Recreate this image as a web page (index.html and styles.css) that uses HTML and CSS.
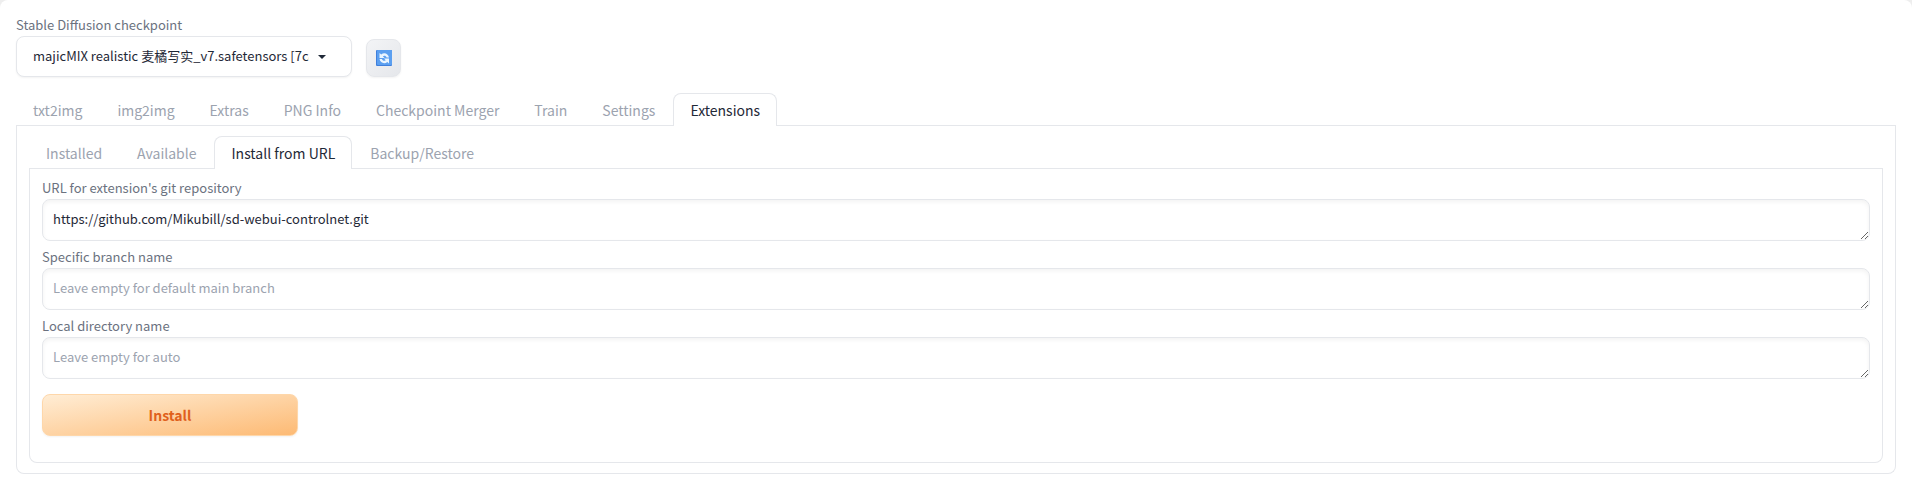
FILE: index.html
```html
<!DOCTYPE html>
<html lang="en">
<head>
    <meta charset="UTF-8">
    <meta name="viewport" content="width=device-width, initial-scale=1.0">
    <title>Stable Diffusion</title>
    <link rel="stylesheet" href="styles.css">
</head>
<body>
    <main class="app">
        <div class="quicksettings">
            <div class="checkpoint">
                <label for="checkpoint">Stable Diffusion checkpoint</label>
                <div class="dropdown">
                    <select id="checkpoint">
                        <option>majicMIX realistic 麦橘写实_v7.safetensors [7c819b6d13]</option>
                    </select>
                    <svg class="arrow" viewBox="0 0 18 18" width="18" height="18"><path d="M5 7h8l-4 4z"/></svg>
                </div>
            </div>
            <button type="button" class="tool" aria-label="Refresh">
                <svg viewBox="0 0 16 16" width="16" height="16">
                    <rect width="16" height="16" rx="1" fill="#3f7fdc"/>
                    <rect x="1" width="15" height="15" rx="1" fill="#5b9ff0"/>
                    <path d="M3.500 3v5H8.500L6.800 6.300C8.300 5.200 10 5.800 10.600 7.500H13C12.300 3.800 8.200 2 5.200 4.600z" fill="#eaf5ff"/>
                    <path d="M13 13.500v-5H8l1.700 1.700C8.200 11.300 6.500 10.700 5.900 9H3.500c.7 3.700 4.800 5.500 7.800 2.900z" fill="#eaf5ff"/>
                </svg>
            </button>
        </div>

        <div class="tabs">
            <nav class="tab-nav">
                <button type="button">txt2img</button>
                <button type="button">img2img</button>
                <button type="button">Extras</button>
                <button type="button">PNG Info</button>
                <button type="button">Checkpoint Merger</button>
                <button type="button">Train</button>
                <button type="button">Settings</button>
                <button type="button" class="selected">Extensions</button>
            </nav>
            <div class="tabitem">
                <div class="tabs">
                    <nav class="tab-nav">
                        <button type="button">Installed</button>
                        <button type="button">Available</button>
                        <button type="button" class="selected">Install from URL</button>
                        <button type="button">Backup/Restore</button>
                    </nav>
                    <form class="tabitem install-form">
                        <div class="field">
                            <label for="url">URL for extension's git repository</label>
                            <textarea id="url" rows="1" spellcheck="false">https://github.com/Mikubill/sd-webui-controlnet.git</textarea>
                        </div>
                        <div class="field">
                            <label for="branch">Specific branch name</label>
                            <textarea id="branch" rows="1" placeholder="Leave empty for default main branch"></textarea>
                        </div>
                        <div class="field">
                            <label for="dirname">Local directory name</label>
                            <textarea id="dirname" rows="1" placeholder="Leave empty for auto"></textarea>
                        </div>
                        <button type="button" class="primary">Install</button>
                    </form>
                </div>
            </div>
        </div>
    </main>
</body>
</html>
```
FILE: styles.css
```css
*{
    margin: 0;
    padding: 0;
    box-sizing: border-box;
}
html{
    background: #eee;
}
body, button, select, textarea{
    font-family: "Noto Sans CJK SC", sans-serif;
    font-size: 13px;
    line-height: 20px;
    color: #1f2937;
}
.app{
    min-height: 100vh;
    padding: 16px;
    background: #fff;
    border-radius: 8px 8px 0 0;
}
label{
    display: block;
    margin-bottom: 2px;
    line-height: 18px;
    color: #6b7280;
}
.quicksettings{
    display: flex;
    align-items: flex-end;
    gap: 14px;
    margin-bottom: 16px;
}
.dropdown{
    position: relative;
    width: 336px;
}
select{
    display: block;
    width: 100%;
    height: 41px;
    padding: 0 42px 2px 16px;
    appearance: none;
    background: #fff;
    border: 1px solid #e5e7eb;
    border-radius: 8px;
    box-shadow: 0 1px 2px rgba(0,0,0,0.05);
}
.arrow{
    position: absolute;
    top: 12px;
    right: 21px;
    fill: #1f2937;
    pointer-events: none;
}
.tool{
    display: flex;
    align-items: center;
    justify-content: center;
    width: 35px;
    height: 38px;
    background: linear-gradient(to bottom right, #f3f4f6, #e5e7eb);
    border: 1px solid #e5e7eb;
    border-radius: 8px;
    box-shadow: 0 1px 2px rgba(0,0,0,0.05);
}
.tab-nav{
    display: flex;
    gap: 1px;
    border-bottom: 1px solid #e5e7eb;
}
.tab-nav button{
    height: 33px;
    margin-bottom: -1px;
    padding: 0 16px;
    background: none;
    border: 1px solid transparent;
    border-bottom: none;
    border-radius: 8px 8px 0 0;
    font-size: 14px;
    color: #9ca3af;
}
.tab-nav .selected{
    background: #fff;
    border-color: #e5e7eb;
    color: #1f2937;
}
.tabitem{
    padding: 10px 12px;
    border: 1px solid #e5e7eb;
    border-top: none;
    border-radius: 0 0 8px 8px;
}
.install-form{
    padding-bottom: 26px;
}
.field{
    margin-bottom: 7px;
}
textarea{
    display: block;
    width: 100%;
    height: 42px;
    padding: 9px 10px;
    background: #fff;
    border: 1px solid #e5e7eb;
    border-radius: 8px;
    box-shadow: inset 0 2px 4px rgba(0,0,0,0.05);
    resize: vertical;
}
textarea::placeholder{
    color: #9ca3af;
}
.primary{
    display: block;
    width: 256px;
    height: 42px;
    margin-top: 15px;
    background: linear-gradient(to bottom right, #ffedd5, #fdba74);
    border: 1px solid #fed7aa;
    border-radius: 8px;
    box-shadow: 0 1px 2px rgba(0,0,0,0.05);
    font-size: 14px;
    font-weight: 600;
    color: #e0601c;
}
```
